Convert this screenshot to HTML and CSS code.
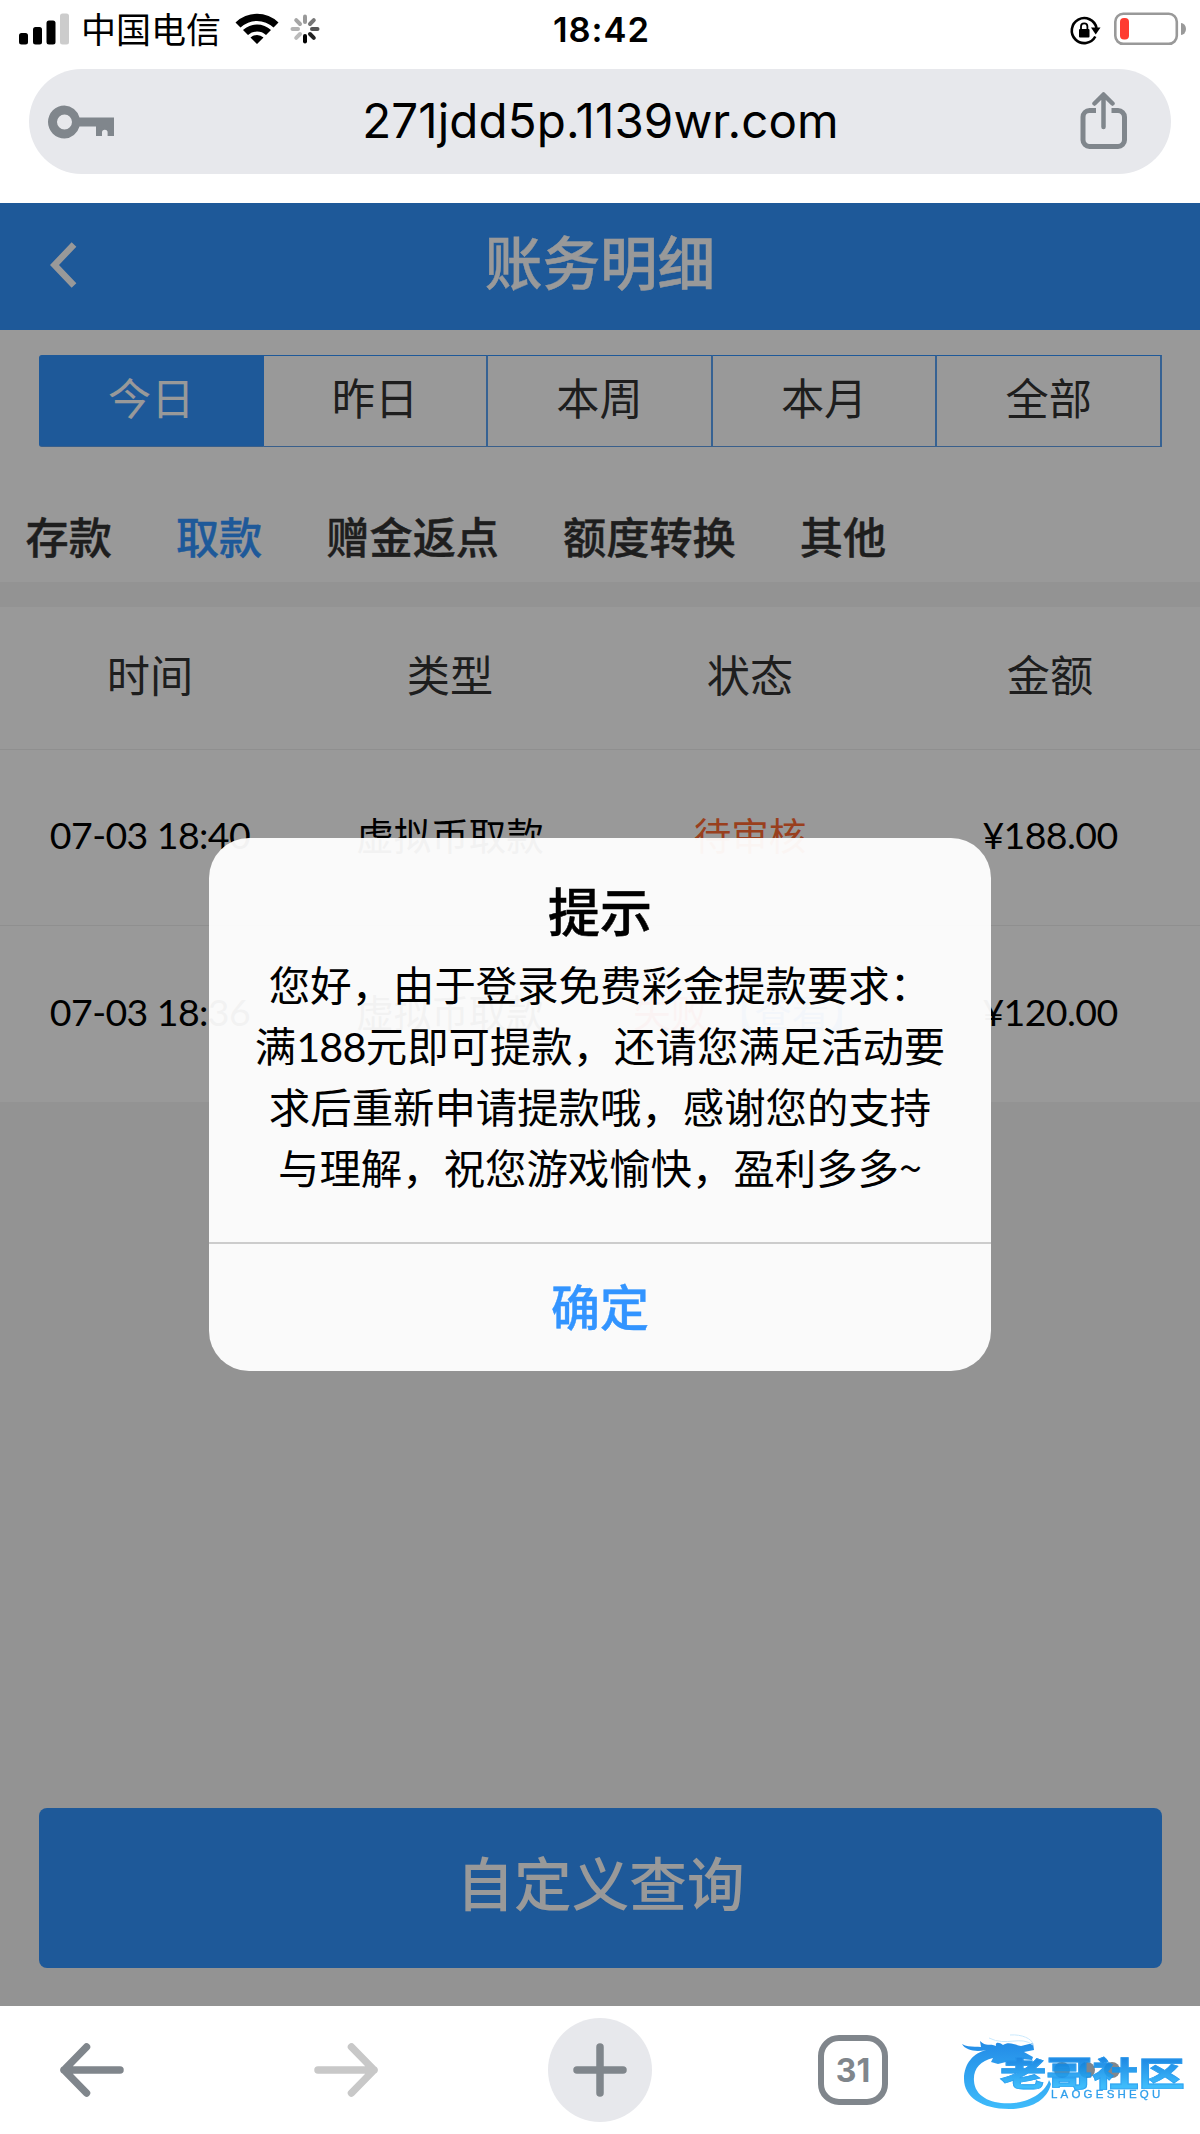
FILE: index.html
```html
<!DOCTYPE html>
<html lang="zh-CN">
<head>
<meta charset="utf-8">
<title>账务明细</title>
<link rel="stylesheet" href="styles.css">
</head>
<body>
<div class="screen">
  <header class="browser-top">
    <div class="status">
      <div class="status-left">
        <svg class="signal" width="52" height="34" viewBox="0 0 52 34"><rect x="0" y="21" width="9" height="11.500" rx="2.500"/><rect x="14" y="15" width="9" height="17.500" rx="2.500"/><rect x="27.500" y="8.500" width="9" height="24" rx="2.500"/><rect x="41" y="1.500" width="9" height="31" rx="2.500" fill="#ccc"/></svg>
        <span class="carrier">中国电信</span>
        <svg class="wifi" width="44" height="34" viewBox="0 0 44 34"><path d="M0.500 10.500A31 31 0 0 1 43.500 10.500L38.500 15.500A24 24 0 0 0 5.500 15.500ZM8 18A20.500 20.500 0 0 1 36 18L31 23A13.500 13.500 0 0 0 13 23ZM15.500 25.500A9.500 9.500 0 0 1 28.500 25.500L22 32Z"/></svg>
        <svg class="spinner" width="30" height="30" viewBox="-15 -15 30 30" stroke-width="4" stroke-linecap="round"><path d="M0-7V-12.500" stroke="#999"/><path d="M5-5L8.800-8.800" stroke="#777"/><path d="M7 0H12.500" stroke="#555"/><path d="M5 5L8.800 8.800" stroke="#222"/><path d="M0 7V12.500" stroke="#000"/><path d="M-5 5L-8.800 8.800" stroke="#bbb"/><path d="M-7 0H-12.500" stroke="#b3b3b3"/><path d="M-5-5L-8.800-8.800" stroke="#a5a5a5"/></svg>
      </div>
      <span class="time">18:42</span>
      <div class="status-right">
        <svg width="32" height="32" viewBox="0 0 32 32"><path d="M26.300 22.500A12.500 12.500 0 1 1 27.500 14" fill="none" stroke="#000" stroke-width="2.600"/><path d="M22 13.500H31.500L26.700 20.500Z"/><rect x="10" y="15" width="10.500" height="8.500" rx="1"/><path d="M12 16V12.500a3.200 3.200 0 0 1 6.400 0V16" fill="none" stroke="#000" stroke-width="1.800"/></svg>
        <svg width="72" height="34" viewBox="0 0 72 34"><rect x="1.300" y="1.800" width="61.500" height="30" rx="8" fill="none" stroke="#999" stroke-width="2.600"/><rect x="6" y="6" width="9" height="21.500" rx="4" fill="#ff3b30"/><path d="M67 11a5 6 0 0 1 0 12Z" fill="#999"/></svg>
      </div>
    </div>
    <div class="address">
      <svg width="68" height="36" viewBox="0 0 68 36" fill="#80868c"><path fill-rule="evenodd" d="M17.500 1.500a16.500 16.500 0 1 0 0 33a16.500 16.500 0 0 0 15-12H49V32H55V28.500a2.800 2.800 0 0 1 5.600 0V32H67V13.500H32.500A16.500 16.500 0 0 0 17.500 1.500ZM17.500 10.500a7.500 7.500 0 1 1 0 15a7.500 7.500 0 0 1 0-15Z"/></svg>
      <span class="url">271jdd5p.1139wr.com</span>
      <svg width="48" height="60" viewBox="0 0 48 60" fill="none" stroke="#80868c" stroke-width="5"><path d="M16 18.500H9.500a6.500 6.500 0 0 0-6.500 6.500V48a6.500 6.500 0 0 0 6.500 6.500H38a6.500 6.500 0 0 0 6.500-6.500V25a6.500 6.500 0 0 0-6.500-6.500H31.500"/><path d="M23.500 35V3.500M14.500 11.500L23.500 2.500L32.500 11.500" stroke-width="4.500" stroke-linecap="round" stroke-linejoin="round"/></svg>
    </div>
  </header>

  <main class="page">
    <div class="title-bar">
      <svg class="chevron" width="30" height="54" viewBox="0 0 30 54"><path d="M24 4.500L4.500 25L24 45.500" fill="none" stroke="#fff" stroke-width="6.500"/></svg>
      <h1>账务明细</h1>
    </div>
    <div class="ranges">
      <span class="range active">今日</span><span class="range">昨日</span><span class="range">本周</span><span class="range">本月</span><span class="range">全部</span>
    </div>
    <nav class="kinds">
      <span>存款</span><span class="current">取款</span><span>赠金返点</span><span>额度转换</span><span>其他</span>
    </nav>
    <div class="band"></div>
    <div class="row head"><span>时间</span><span>类型</span><span>状态</span><span>金额</span></div>
    <div class="row"><span class="num">07-03 18:40</span><span>虚拟币取款</span><span class="pending">待审核</span><span class="num">¥188.00</span></div>
    <div class="row last"><span class="num">07-03 18:36</span><span>虚拟币取款</span><span class="failed">失败 <a class="view">【查看】</a></span><span class="num">¥120.00</span></div>
    <button class="query">自定义查询</button>
    <div class="mask">
      <section class="dialog">
        <div class="dialog-body">
          <h2>提示</h2>
          <p>您好，由于登录免费彩金提款要求：<br>满<span class="amount">188</span>元即可提款，还请您满足活动要<br>求后重新申请提款哦，感谢您的支持<br>与理解，祝您游戏愉快，盈利多多~</p>
        </div>
        <div class="confirm">确定</div>
      </section>
    </div>
  </main>

  <footer class="toolbar">
    <svg width="66" height="56" viewBox="0 0 66 56" fill="none" stroke="#80868c" stroke-width="7.500" stroke-linecap="round" stroke-linejoin="round"><path d="M61 28H5M27.500 5L5 28L27.500 51"/></svg>
    <svg class="forward" width="66" height="56" viewBox="0 0 66 56" fill="none" stroke="#c8c8c8" stroke-width="7.500" stroke-linecap="round" stroke-linejoin="round"><path d="M5 28H61M38.500 5L61 28L38.500 51"/></svg>
    <div class="add"><svg width="54" height="54" viewBox="0 0 54 54" stroke="#80868c" stroke-width="7.500" stroke-linecap="round"><path d="M27 4V50M4 27H50"/></svg></div>
    <div class="count">31</div>
    <div class="more">
      <i></i><i></i><i></i>
      <div class="brand">
        <svg class="dragon" width="94" height="78" viewBox="0 0 94 78"><defs><linearGradient id="sea" x1="0" y1="0" x2="0" y2="1"><stop offset="0" stop-color="#0b7fe4"/><stop offset="1" stop-color="#2ab5fb"/></linearGradient></defs><path fill="url(#sea)" d="M2 11C8 15 15 13 21 14L20 8C26 14 30 10 36 13C35 9 39 9 43 12C49 8 55 12 61 13L73 10L74 17L64 19L73 24L72 27L61 26L66 29L56 28L49 33L46 29L38 31L31 29L33 25C20 28 13 36 14 48C15 65 34 72 54 70C72 68 86 58 89 47L91 51C87 68 70 76 49 76C22 76 4 64 4 46C4 30 14 20 26 17C17 19 6 18 2 11Z"/><path d="M29 5C47 14 60 2 73 12M50 2C62 1 72 6 73 11" fill="none" stroke="#c4e6fc" stroke-width="1"/></svg>
        <span class="brand-name">老哥社区</span>
        <span class="brand-latin">LAOGESHEQU</span>
      </div>
    </div>
  </footer>
</div>
</body>
</html>
```
FILE: styles.css
```css
* { box-sizing: border-box; }
body { margin: 0; font-family: "Noto Sans CJK SC", sans-serif; color: #000; }
h1, h2, p { margin: 0; }
svg { display: block; flex: none; }
.screen { width: 1200px; height: 2134px; display: flex; flex-direction: column; background: #fff; overflow: hidden; }

.browser-top { height: 203px; flex: none; }
.status { height: 69px; display: grid; grid-template-columns: 1fr auto 1fr; padding: 0 14px 0 19px; }
.status-left { display: flex; padding-top: 12px; }
.carrier { font-size: 35px; line-height: 32px; margin-left: 10px; }
.wifi { margin-left: 14px; }
.spinner { margin: 2px 0 0 11px; }
.time { font: 600 34.500px/60px Inter, sans-serif; letter-spacing: 1px; margin-left: -2px; }
.status-right { display: flex; justify-content: flex-end; gap: 13px; padding-top: 12px; }
.status-right svg:first-child { margin-top: 2px; }
.address { height: 105px; margin: 0 29px; padding: 0 43px 0 18px; border-radius: 53px; background: #e7e8ec; display: flex; align-items: center; justify-content: space-between; }
.url { font: 400 47.500px/101px Inter, sans-serif; letter-spacing: 0.100px; margin: 0 0 3px 6px; }

.page { position: relative; height: 1803px; flex: none; background: #f5f5f5; color: #333; }
.title-bar { height: 127px; background: #3294ff; display: grid; grid-template-columns: 1fr auto 1fr; align-items: center; color: #fff; }
.chevron { margin-left: 50px; }
h1 { font-size: 57.600px; font-weight: 500; line-height: 110px; padding-bottom: 13px; -webkit-text-stroke: 0.400px; }
.ranges { background: #fff; padding: 25px 38px 0 39px; height: 146px; display: grid; grid-template-columns: repeat(5, 1fr); }
.range { height: 92px; border: 1px solid #3294ff; border-bottom-color: #5f9fe8; font-size: 43.200px; line-height: 80px; text-align: center; }
.range + .range { border-left-width: 0; }
.range:nth-child(n+2) { border-right: 2px solid #5ba4f5; }
.range.active { background: #3294ff; color: #fff; border-radius: 3px 0 0 3px; }
.kinds { height: 106px; background: #fff; display: flex; gap: 64px; padding-left: 25.500px; font-size: 43.200px; line-height: 118px; font-weight: 500; -webkit-text-stroke: 0.400px; }
.current { color: #3294ff; }
.band { height: 25px; }
.row { height: 176px; display: grid; grid-template-columns: repeat(4, 1fr); align-items: center; text-align: center; background: #fff; border-bottom: 1px solid #eee; font-size: 37.500px; color: #000; line-height: 60px; padding-bottom: 7px; white-space: nowrap; }
.row.head { height: 143px; font-size: 43.200px; color: #333; padding-bottom: 11px; }
.row.last { border-bottom: 0; }
.num { font-family: Lato, sans-serif; font-size: 37.500px; letter-spacing: -0.600px; padding-top: 2px; }
.pending { color: #ff6a33; }
.failed { color: #ff3333; }
.view { color: #3294ff; }
.query { display: block; width: 1123px; height: 160px; margin: 706px 38px 0 39px; padding: 0 0 15px; border: 0; border-radius: 8px; background: #3294ff; color: #fff; font-family: inherit; font-size: 57.600px; font-weight: 500; }

.mask { position: absolute; inset: 0; background: rgba(0, 0, 0, 0.4); display: flex; justify-content: center; align-items: flex-start; padding-top: 635px; }
.dialog { width: 782px; height: 533px; border-radius: 40px; background: rgba(255, 255, 255, 0.950); color: #000; text-align: center; }
.dialog-body { height: 404px; padding-top: 34px; }
h2 { font-size: 52px; line-height: 76px; font-weight: 500; -webkit-text-stroke: 0.500px; }
p { font-size: 41.400px; line-height: 61px; margin-top: 5px; white-space: nowrap; }
.amount { font-family: Lato, sans-serif; letter-spacing: -0.800px; line-height: 1; }
.confirm { border-top: 2px solid #ccc; font-size: 49px; font-weight: 500; line-height: 122px; color: #3294ff; -webkit-text-stroke: 0.400px; }

.toolbar { height: 128px; flex: none; display: flex; align-items: center; padding-left: 59px; }
.forward { margin-left: 188px; }
.add { width: 104px; height: 104px; border-radius: 50%; background: #e7e8ec; margin-left: 169px; display: flex; align-items: center; justify-content: center; }
.count { width: 70px; height: 70px; border: 6.500px solid #80868c; border-radius: 21px; margin-left: 166px; font: 700 32px/60px Inter, sans-serif; color: #80868c; text-align: center; }
.more { position: relative; display: flex; gap: 9px; margin-left: 166px; }
.more i { width: 16px; height: 16px; border-radius: 50%; background: #80868c; }
.brand { position: absolute; left: -94px; top: -31px; width: 225px; height: 80px; opacity: 0.900; }
.dragon { position: absolute; left: 0; top: 2px; }
.brand-name { position: absolute; left: 40px; top: 21px; font-size: 33px; font-weight: 900; line-height: 40px; white-space: nowrap; transform: scaleX(1.400); transform-origin: left; background: linear-gradient(#067be0 15%, #2ab5fb 85%); background-clip: text; -webkit-background-clip: text; color: transparent; -webkit-text-stroke: 0.800px rgba(22, 146, 236, 0.700); }
.brand-latin { position: absolute; left: 91px; top: 56px; font: 400 11.500px/14px "Liberation Sans", sans-serif; letter-spacing: 3.200px; color: #1794ea; -webkit-text-stroke: 0.300px; }
```
